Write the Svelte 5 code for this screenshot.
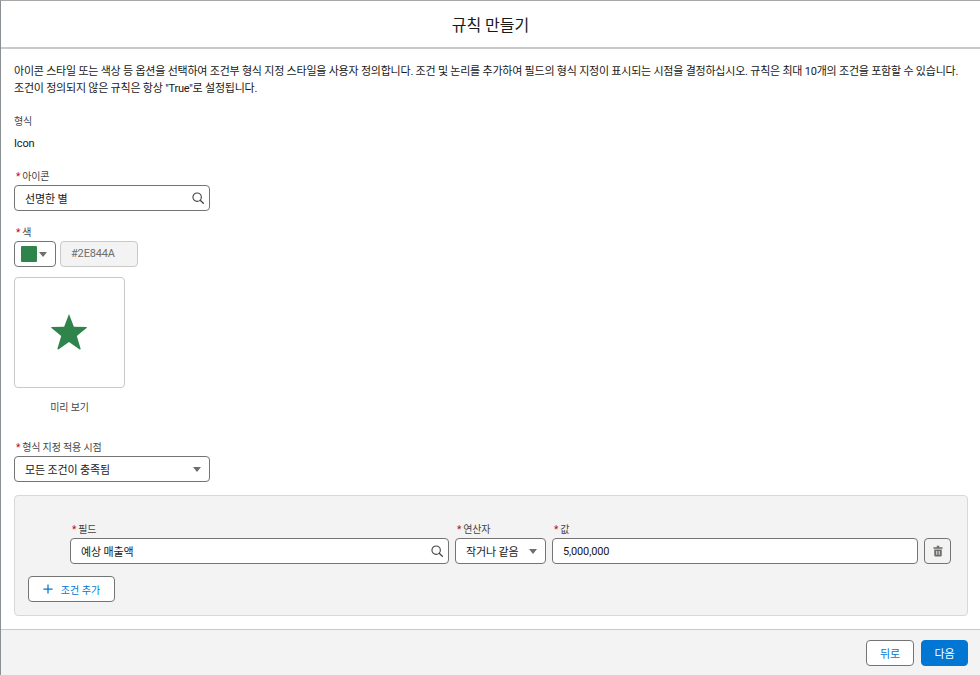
<script>
  const desc = '아이콘 스타일 또는 색상 등 옵션을 선택하여 조건부 형식 지정 스타일을 사용자 정의합니다. 조건 및 논리를 추가하여 필드의 형식 지정이 표시되는 시점을 결정하십시오. 규칙은 최대 10개의 조건을 포함할 수 있습니다.\n조건이 정의되지 않은 규칙은 항상 "True"로 설정됩니다.';
</script>

{#snippet search()}
  <svg class="search" viewBox="0 0 14 14" width="12" height="12">
    <circle cx="6" cy="6" r="4.9" fill="none" stroke="#444" stroke-width="1.300" />
    <path d="M9.6 9.6 L13.200 13.200" stroke="#444" stroke-width="1.500" stroke-linecap="round" />
  </svg>
{/snippet}

{#snippet label(text)}
  <div class="label"><span class="req">*</span>{text}</div>
{/snippet}

<div class="modal">
  <header class="head">
    <h1>규칙 만들기</h1>
  </header>

  <main class="body">
    <p class="desc">{desc}</p>

    <div class="plain-label">형식</div>
    <div class="plain-value">Icon</div>

    <div class="icon-field">
      {@render label('아이콘')}
      <div class="input wide">
        <span>선명한 별</span>
        {@render search()}
      </div>
    </div>

    <div class="color-field">
      {@render label('색')}
      <div class="color-row">
        <div class="swatch-btn">
          <span class="swatch"></span>
          <span class="caret"></span>
        </div>
        <div class="hex">#2E844A</div>
      </div>
    </div>

    <div class="preview">
      <svg viewBox="0.5 1 38 38" width="37" height="37">
        <path d="M19 1 L24 14 L37 14.3 Q37.600 14.600 37 15.500 L27 23.500 L31 37 Q30.600 37.800 29.600 37.300 L19 29.800 L8.400 37.300 Q7.400 37.800 7 37 L11 23.500 L1 15.500 Q0.400 14.600 1 14.300 L14 14 Z" fill="#2e844a" />
      </svg>
    </div>
    <div class="preview-cap">미리 보기</div>

    <div class="when-field">
      {@render label('형식 지정 적용 시점')}
      <div class="input wide">
        <span>모든 조건이 충족됨</span>
        <span class="caret"></span>
      </div>
    </div>

    <section class="conditions">
      <div class="cond-row">
        <div class="col field-col">
          {@render label('필드')}
          <div class="input">
            <span>예상 매출액</span>
            {@render search()}
          </div>
        </div>
        <div class="col op-col">
          {@render label('연산자')}
          <div class="input">
            <span>작거나 같음</span>
            <span class="caret"></span>
          </div>
        </div>
        <div class="col val-col">
          {@render label('값')}
          <div class="input">
            <span>5,000,000</span>
          </div>
        </div>
        <button class="trash" aria-label="삭제">
          <svg viewBox="0 0 12 14" width="10" height="12">
            <path d="M4.500 .8 H7.500 V2.500 H11.500 V4.200 H.5 V2.500 H4.500 Z M1.500 5.300 H10.500 V12.500 Q10.500 13.500 9.500 13.500 H2.500 Q1.500 13.500 1.500 12.500 Z" fill="#706e6b" />
            <path d="M4.500 7 V11.500 M7.500 7 V11.500" stroke="#f3f3f3" stroke-width="1.100" />
          </svg>
        </button>
      </div>
      <button class="add">
        <svg viewBox="0 0 12 12" width="10" height="10">
          <path d="M6 .5 V11.500 M.5 6 H11.500" stroke="#0176d3" stroke-width="1.500" />
        </svg>
        조건 추가
      </button>
    </section>
  </main>

  <footer class="foot">
    <button class="btn back">뒤로</button>
    <button class="btn next">다음</button>
  </footer>
</div>

<style>
  :global(body) {
    margin: 0;
    background: #fff;
  }
  .modal {
    width: 980px;
    height: 675px;
    box-sizing: border-box;
    display: flex;
    flex-direction: column;
    border-top: 1px solid #a8a8a8;
    border-left: 1px solid #8a8f94;
    font-family: Roboto, "Noto Sans CJK KR", sans-serif;
    font-size: 11px;
    letter-spacing: -0.15px;
    color: #181818;
    overflow: hidden;
  }
  .head {
    height: 45px;
    flex-shrink: 0;
    display: flex;
    align-items: center;
    justify-content: center;
    padding-bottom: 1px;
    border-bottom: 2px solid #c9c9c9;
  }
  h1 {
    margin: 0;
    font-size: 16px;
    font-weight: 400;
    letter-spacing: 0;
  }
  .body {
    flex: 1;
    padding: 14px 12px 0 13px;
    min-height: 0;
  }
  .desc {
    margin: 0;
    line-height: 17px;
    letter-spacing: -0.22px;
    white-space: pre-line;
  }
  .plain-label {
    margin-top: 17px;
    color: #444;
    font-size: 10px;
    line-height: 16px;
  }
  .plain-value {
    margin-top: 6px;
    line-height: 16px;
  }
  .icon-field {
    margin-top: 18px;
  }
  .color-field {
    margin-top: 15px;
  }
  .when-field {
    margin-top: 26px;
  }
  .label {
    font-size: 10px;
    color: #444;
    line-height: 14px;
    margin-bottom: 1px;
    white-space: nowrap;
  }
  .req {
    color: #ba0517;
    margin: 0 2px 0 2px;
  }
  .input {
    height: 26px;
    box-sizing: border-box;
    border: 1px solid #747474;
    border-radius: 4px;
    background: #fff;
    display: flex;
    align-items: center;
    justify-content: space-between;
    padding: 0 5px 0 10px;
  }
  .input > .caret {
    margin-right: 3px;
  }
  .wide {
    width: 196px;
  }
  .search {
    flex-shrink: 0;
  }
  .caret {
    width: 0;
    height: 0;
    border-left: 4.500px solid transparent;
    border-right: 4.500px solid transparent;
    border-top: 5px solid #706e6b;
    flex-shrink: 0;
  }
  .color-row {
    display: flex;
    gap: 4px;
  }
  .swatch-btn {
    width: 42px;
    height: 26px;
    box-sizing: border-box;
    border: 1px solid #747474;
    border-radius: 4px;
    background: #fff;
    display: flex;
    align-items: center;
    gap: 2px;
    padding-left: 6px;
  }
  .swatch {
    width: 16px;
    height: 16px;
    background: #2e844a;
    border-radius: 1px;
  }
  .hex {
    width: 78px;
    height: 26px;
    box-sizing: border-box;
    border: 1px solid #c9c9c9;
    border-radius: 4px;
    background: #f3f3f3;
    color: #706e6b;
    line-height: 24px;
    padding-left: 10px;
  }
  .preview {
    margin-top: 10px;
    width: 111px;
    height: 111px;
    box-sizing: border-box;
    border: 1px solid #c9c9c9;
    border-radius: 4px;
    display: flex;
    align-items: center;
    justify-content: center;
  }
  .preview-cap {
    width: 111px;
    margin-top: 13px;
    text-align: center;
    font-size: 10px;
    line-height: 14px;
    color: #444;
  }
  .conditions {
    margin-top: 13px;
    width: 954px;
    height: 121px;
    box-sizing: border-box;
    background: #f3f3f3;
    border: 1px solid #d8d8d8;
    border-radius: 4px;
    padding: 27px 16px 0 13px;
  }
  .cond-row {
    display: flex;
    align-items: flex-end;
    gap: 6px;
    padding-left: 42px;
  }
  .field-col {
    width: 379px;
  }
  .op-col {
    width: 91px;
  }
  .val-col {
    width: 366px;
  }
  .trash {
    width: 27px;
    height: 26px;
    padding: 0;
    border: 1px solid #747474;
    border-radius: 4px;
    background: #f3f3f3;
    display: flex;
    align-items: center;
    justify-content: center;
  }
  .add {
    margin-top: 12px;
    width: 87px;
    height: 26px;
    padding: 0;
    border: 1px solid #747474;
    border-radius: 4px;
    background: #fff;
    color: #0176d3;
    font: inherit;
    font-size: 10px;
    letter-spacing: 0;
    display: flex;
    align-items: center;
    justify-content: center;
    gap: 8px;
  }
  .foot {
    height: 46px;
    flex-shrink: 0;
    box-sizing: border-box;
    background: #f3f3f3;
    border-top: 1px solid #c9c9c9;
    display: flex;
    justify-content: flex-end;
    align-items: flex-start;
    gap: 7px;
    padding: 10px 12px 0 0;
  }
  .btn {
    width: 48px;
    height: 26px;
    padding: 0;
    border-radius: 4px;
    font: inherit;
    font-size: 11px;
  }
  .back {
    background: #fff;
    border: 1px solid #747474;
    color: #0176d3;
  }
  .next {
    width: 47px;
    background: #0176d3;
    border: 1px solid #0176d3;
    color: #fff;
  }
</style>
